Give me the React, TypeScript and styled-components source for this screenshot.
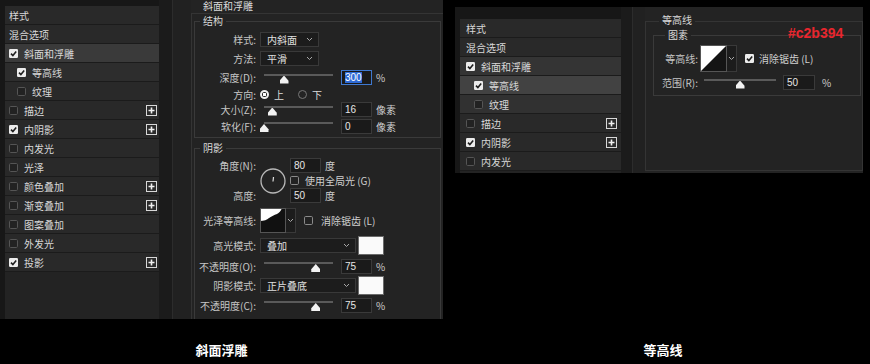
import React from 'react';
import styled, { createGlobalStyle } from 'styled-components';

const UI_FONT = `"Noto Sans CJK SC", "Noto Sans", "DejaVu Sans", sans-serif`;

const GlobalStyle = createGlobalStyle`
  * { box-sizing: border-box; }
  body { margin: 0; background: #000; }
`;

type Item = { label: string; check?: boolean; sub?: boolean; plus?: boolean; bg?: string };

const leftItems: Item[] = [
    { label: '样式' },
    { label: '混合选项' },
    { label: '斜面和浮雕', check: true, bg: '#3a3a3a' },
    { label: '等高线', check: true, sub: true, bg: '#2d2d2d' },
    { label: '纹理', check: false, sub: true },
    { label: '描边', check: false, plus: true },
    { label: '内阴影', check: true, plus: true },
    { label: '内发光', check: false },
    { label: '光泽', check: false },
    { label: '颜色叠加', check: false, plus: true },
    { label: '渐变叠加', check: false, plus: true },
    { label: '图案叠加', check: false },
    { label: '外发光', check: false },
    { label: '投影', check: true, plus: true },
];

const rightItems: Item[] = [
    { label: '样式' },
    { label: '混合选项' },
    { label: '斜面和浮雕', check: true, bg: '#343434' },
    { label: '等高线', check: true, sub: true, bg: '#424242' },
    { label: '纹理', check: false, sub: true, bg: '#313131' },
    { label: '描边', check: false, plus: true },
    { label: '内阴影', check: true, plus: true },
    { label: '内发光', check: false },
];

const Root = styled.div`
    width: 870px;
    height: 364px;
    background: #000;
    display: grid;
    grid-template-columns: 443px 408px;
    grid-template-rows: 335px 1fr;
    column-gap: 12px;
    font-family: ${UI_FONT};
    overflow: hidden;
`;

const Shot = styled.div<{ $h: number; $top: number }>`
    height: ${p => p.$h}px;
    margin-top: ${p => p.$top}px;
    display: flex;
    background: #171717;
    padding-left: 5px;
    overflow: hidden;
`;

const Caption = styled.div<{ $shift?: number }>`
    padding-top: 7px;
    padding-left: ${p => p.$shift ?? 0}px;
    text-align: center;
    color: #fff;
    font-size: 13px;
    line-height: 16px;
    font-weight: bold;
`;

const ListPanel = styled.div<{ $w: number; $top: number }>`
    width: ${p => p.$w}px;
    flex-shrink: 0;
    margin-top: ${p => p.$top}px;
    background: #232323;
    display: flex;
    flex-direction: column;
`;

const ListRow = styled.div<{ $bg?: string; $pad: number; $end: number }>`
    height: 19px;
    flex-shrink: 0;
    display: flex;
    align-items: center;
    gap: 6px;
    padding: 0 ${p => p.$end}px 0 ${p => p.$pad}px;
    background: ${p => p.$bg ?? '#292929'};
    border-bottom: 1px solid #1b1b1b;
    color: #d8d8d8;
    font-size: 10px;
    white-space: nowrap;
`;

const RowText = styled.span`
    flex: 1;
`;

const ScrollCol = styled.div<{ $w: number }>`
    width: ${p => p.$w}px;
    flex-shrink: 0;
    background: #1b1b1b;
`;

const SpacerCol = styled.div<{ $w: number }>`
    width: ${p => p.$w}px;
    flex-shrink: 0;
    background: #212121;
    border-left: 1px solid #2c2c2c;
`;

const Content = styled.div`
    flex: 1;
    position: relative;
    background: #232323;
    overflow: hidden;
`;

const OuterBox = styled.div<{ $mt: number; $pl: number; $full?: boolean }>`
    margin-top: ${p => p.$mt}px;
    padding: 0 ${p => (p.$full ? 1 : 2)}px 0 ${p => p.$pl}px;
    border-top: 1px solid #343434;
    border-left: 1px solid #343434;
    border-right: ${p => (p.$full ? '1px solid #343434' : 'none')};
    border-bottom: ${p => (p.$full ? '1px solid #343434' : 'none')};
    height: ${p => (p.$full ? '150px' : 'auto')};
`;

const Group = styled.div<{ $mt: number; $pt: number; $pb: number }>`
    margin-top: ${p => p.$mt}px;
    border: 1px solid #3a3a3a;
    padding-bottom: ${p => p.$pb}px;
`;

const GroupRows = styled.div<{ $pt: number }>`
    padding-top: ${p => p.$pt}px;
`;

const Legend = styled.div<{ $up?: number; $ml?: number }>`
    width: fit-content;
    height: 12px;
    margin: -${p => p.$up ?? 7}px 0 0 ${p => p.$ml ?? 7}px;
    padding: 0 3px;
    background: #232323;
    color: #dadada;
    font-size: 10px;
    line-height: 12px;
    white-space: nowrap;
`;

const FormRow = styled.div<{ $h: number; $mt?: number; $label: number; $gap?: number }>`
    display: grid;
    grid-template-columns: ${p => p.$label}px auto;
    column-gap: ${p => p.$gap ?? 4}px;
    align-items: center;
    height: ${p => p.$h}px;
    margin-top: ${p => p.$mt ?? 0}px;
`;

const Label = styled.span<{ $row?: number }>`
    grid-row: ${p => p.$row ?? 'auto'};
    text-align: right;
    color: #c6c6c6;
    font-size: 10px;
    white-space: nowrap;
`;

const Controls = styled.div<{ $gap?: number; $row?: number; $col?: number }>`
    grid-row: ${p => p.$row ?? 'auto'};
    grid-column: ${p => p.$col ?? 'auto'};
    display: flex;
    align-items: center;
    gap: ${p => p.$gap ?? 4}px;
    color: #cfcfcf;
    font-size: 10px;
    white-space: nowrap;
`;

const Select = styled.div<{ $w: number }>`
    width: ${p => p.$w}px;
    height: 15px;
    display: flex;
    align-items: center;
    justify-content: space-between;
    padding: 0 5px 0 6px;
    background: #1c1c1c;
    border: 1px solid #393939;
    color: #e0e0e0;
    font-size: 10px;
`;

const NumBox = styled.div<{ $w?: number; $active?: boolean }>`
    width: ${p => p.$w ?? 31}px;
    height: 15px;
    padding-left: 3px;
    background: #1a1a1a;
    border: 1px solid ${p => (p.$active ? '#3f78cf' : '#3a3a3a')};
    color: #e6e6e6;
    font-family: "Liberation Sans", Arial, sans-serif;
    font-size: 10px;
    line-height: 13px;
`;

const Unit = styled.span<{ $ml?: number }>`
    margin-left: ${p => p.$ml ?? 0}px;
`;

const Selected = styled.span`
    background: #2f6bd6;
    color: #fff;
`;

const SliderBox = styled.div<{ $w: number }>`
    position: relative;
    width: ${p => p.$w}px;
    height: 14px;
    padding: 3px 4px 0;
`;

const Track = styled.div`
    height: 2px;
    background: #5a5a5a;
`;

const Thumb = styled.div`
    position: absolute;
    top: 5px;
    width: 9px;
    height: 8px;
    background: #f2f2f2;
    clip-path: polygon(50% 0, 100% 65%, 100% 100%, 0 100%, 0 65%);
`;

const Swatch = styled.div`
    width: 26px;
    height: 19px;
    background: #fafafa;
    border: 1px solid #6a6a6a;
`;

const RadioDot = styled.span<{ $on?: boolean }>`
    width: 9px;
    height: 9px;
    border-radius: 50%;
    border: ${p => (p.$on ? '2px solid #eee' : '1px solid #777')};
    background: ${p => (p.$on ? 'radial-gradient(circle, #fff 0 1.5px, #1c1c1c 2px)' : 'transparent')};
`;

const RadioItem = styled.span`
    display: flex;
    align-items: center;
    gap: 5px;
    color: #dcdcdc;
`;

const ContourWrap = styled.div`
    display: flex;
`;

const ContourArrow = styled.div<{ $h: number }>`
    width: 10px;
    height: ${p => p.$h}px;
    display: flex;
    align-items: center;
    justify-content: center;
    background: #1c1c1c;
    border: 1px solid #393939;
    border-left: none;
`;

const AngleBlock = styled.div`
    display: grid;
    grid-template-columns: 61px 26px auto;
    grid-template-rows: 15px 15px 15px;
    column-gap: 4px;
    align-items: center;
`;

const Dial = styled.div`
    grid-column: 2;
    grid-row: 1 / span 3;
    display: flex;
`;

const Note = styled.div`
    position: absolute;
    left: 143px;
    top: 18px;
    color: #e9262e;
    font-family: "Liberation Sans", Arial, sans-serif;
    font-weight: bold;
    font-size: 14px;
    line-height: 16px;
`;

const CheckBox = ({ on, dim }: { on: boolean; dim?: boolean }) =>
    on ? (
        <svg width="9" height="9" viewBox="0 0 9 9">
            <rect x="0" y="0" width="9" height="9" rx="1.2" fill="#ececec" />
            <path d="M2 4.6 L3.9 6.5 L7.2 2.6" stroke="#1e1e1e" strokeWidth="1.6" fill="none" />
        </svg>
    ) : (
        <svg width="9" height="9" viewBox="0 0 9 9">
            <rect x="0.5" y="0.5" width="8" height="8" rx="1.2" fill="#222" stroke={dim ? '#555' : '#8a8a8a'} />
        </svg>
    );

const PlusBtn = () => (
    <svg width="11" height="11" viewBox="0 0 11 11">
        <rect x="0.5" y="0.5" width="10" height="10" fill="#2c2c2c" stroke="#d8d8d8" />
        <path d="M5.5 2.5 V8.5 M2.5 5.5 H8.5" stroke="#f0f0f0" strokeWidth="1.6" />
    </svg>
);

const Chevron = () => (
    <svg width="7" height="5" viewBox="0 0 7 5">
        <path d="M1 1 L3.5 3.5 L6 1" stroke="#a8a8a8" strokeWidth="1" fill="none" />
    </svg>
);

const Slider = ({ w, pct }: { w: number; pct: number }) => {
    const span = w - 8;
    return (
        <SliderBox $w={w}>
            <Track />
            <Thumb style={{ left: 4 + span * pct - 4.5 }} />
        </SliderBox>
    );
};

const List = ({ items, w, top, pad, end }: { items: Item[]; w: number; top: number; pad: number; end: number }) => (
    <ListPanel $w={w} $top={top}>
        {items.map(it => (
            <ListRow key={it.label} $bg={it.bg} $pad={it.sub ? pad + 8 : pad} $end={end}>
                {it.check !== undefined && <CheckBox on={it.check} dim />}
                <RowText>{it.label}</RowText>
                {it.plus && <PlusBtn />}
            </ListRow>
        ))}
    </ListPanel>
);

const GlossContour = () => (
    <svg width="26" height="25" viewBox="0 0 26 25">
        <rect x="0" y="0" width="26" height="25" fill="#fff" />
        <path d="M0 13 C4 13 7 12 9 10 C12 8 14 7 17 6 C19 5 21 3 22 0 L26 0 L26 25 L0 25 Z" fill="#111" />
        <rect x="0.5" y="0.5" width="25" height="24" fill="none" stroke="#555" />
    </svg>
);

const LinearContour = () => (
    <svg width="27" height="27" viewBox="0 0 27 27">
        <rect x="0" y="0" width="27" height="27" fill="#fff" />
        <path d="M0 27 L27 0 L27 27 Z" fill="#141414" />
        <rect x="0.5" y="0.5" width="26" height="26" fill="none" stroke="#555" />
    </svg>
);

const BevelPanel = () => (
    <Content>
        <OuterBox $mt={13} $pl={2}>
            <Legend $up={14} $ml={6}>斜面和浮雕</Legend>
            <Group $mt={9} $pt={3} $pb={3}>
                <Legend $ml={5}>结构</Legend>
                <GroupRows $pt={3}>
                    <FormRow $h={19} $label={61}>
                        <Label>样式:</Label>
                        <Controls><Select $w={59}>内斜面<Chevron /></Select></Controls>
                    </FormRow>
                    <FormRow $h={19} $label={61}>
                        <Label>方法:</Label>
                        <Controls><Select $w={59}>平滑<Chevron /></Select></Controls>
                    </FormRow>
                    <FormRow $h={19} $label={61}>
                        <Label>深度(D):</Label>
                        <Controls>
                            <Slider w={77} pct={0.29} />
                            <NumBox $active><Selected>300</Selected></NumBox>
                            <Unit>%</Unit>
                        </Controls>
                    </FormRow>
                    <FormRow $h={14} $label={61}>
                        <Label>方向:</Label>
                        <Controls $gap={14}>
                            <RadioItem><RadioDot $on />上</RadioItem>
                            <RadioItem><RadioDot />下</RadioItem>
                        </Controls>
                    </FormRow>
                    <FormRow $h={17} $label={61}>
                        <Label>大小(Z):</Label>
                        <Controls>
                            <Slider w={77} pct={0.12} />
                            <NumBox>16</NumBox>
                            <Unit>像素</Unit>
                        </Controls>
                    </FormRow>
                    <FormRow $h={16} $label={61}>
                        <Label>软化(F):</Label>
                        <Controls>
                            <Slider w={77} pct={0} />
                            <NumBox>0</NumBox>
                            <Unit>像素</Unit>
                        </Controls>
                    </FormRow>
                </GroupRows>
            </Group>
            <Group $mt={10} $pt={4} $pb={20}>
                <Legend $ml={5}>阴影</Legend>
                <GroupRows $pt={4}>
                    <AngleBlock>
                        <Label $row={1}>角度(N):</Label>
                        <Dial>
                            <svg width="26" height="26" viewBox="0 0 26 26">
                                <circle cx="13" cy="13" r="12" fill="none" stroke="#b8b8b8" strokeWidth="1.3" />
                                <path d="M13 13.5 L13.5 9" stroke="#e0e0e0" strokeWidth="1.2" />
                            </svg>
                        </Dial>
                        <Controls $row={1} $col={3}>
                            <NumBox>80</NumBox>
                            <Unit>度</Unit>
                        </Controls>
                        <Controls $row={2} $col={3} $gap={6}>
                            <CheckBox on={false} />
                            <span>使用全局光 (G)</span>
                        </Controls>
                        <Label $row={3}>高度:</Label>
                        <Controls $row={3} $col={3}>
                            <NumBox>50</NumBox>
                            <Unit>度</Unit>
                        </Controls>
                    </AngleBlock>
                    <FormRow $h={26} $mt={4} $label={61}>
                        <Label>光泽等高线:</Label>
                        <Controls $gap={8}>
                            <ContourWrap>
                                <GlossContour />
                                <ContourArrow $h={25}><Chevron /></ContourArrow>
                            </ContourWrap>
                            <CheckBox on={false} />
                            <span>消除锯齿 (L)</span>
                        </Controls>
                    </FormRow>
                    <FormRow $h={19} $mt={3} $label={61}>
                        <Label>高光模式:</Label>
                        <Controls $gap={2}>
                            <Select $w={96}>叠加<Chevron /></Select>
                            <Swatch />
                        </Controls>
                    </FormRow>
                    <FormRow $h={18} $mt={2} $label={61}>
                        <Label>不透明度(O):</Label>
                        <Controls>
                            <Slider w={77} pct={0.75} />
                            <NumBox>75</NumBox>
                            <Unit>%</Unit>
                        </Controls>
                    </FormRow>
                    <FormRow $h={20} $label={61}>
                        <Label>阴影模式:</Label>
                        <Controls $gap={2}>
                            <Select $w={96}>正片叠底<Chevron /></Select>
                            <Swatch />
                        </Controls>
                    </FormRow>
                    <FormRow $h={18} $mt={1} $label={61}>
                        <Label>不透明度(C):</Label>
                        <Controls>
                            <Slider w={77} pct={0.75} />
                            <NumBox>75</NumBox>
                            <Unit>%</Unit>
                        </Controls>
                    </FormRow>
                </GroupRows>
            </Group>
        </OuterBox>
    </Content>
);

const ContourPanel = () => (
    <Content>
        <OuterBox $mt={14} $pl={7} $full>
            <Legend $up={8} $ml={6}>等高线</Legend>
            <Group $mt={9} $pt={4} $pb={6}>
                <Legend $ml={11}>图素</Legend>
                <GroupRows $pt={4}>
                    <FormRow $h={27} $label={44} $gap={2}>
                        <Label>等高线:</Label>
                        <Controls $gap={8}>
                            <ContourWrap>
                                <LinearContour />
                                <ContourArrow $h={27}><Chevron /></ContourArrow>
                            </ContourWrap>
                            <Controls $gap={5}>
                                <CheckBox on />
                                <span>消除锯齿 (L)</span>
                            </Controls>
                        </Controls>
                    </FormRow>
                    <FormRow $h={14} $mt={3} $label={44} $gap={2}>
                        <Label>范围(R):</Label>
                        <Controls $gap={3}>
                            <Slider w={80} pct={0.5} />
                            <NumBox $w={32}>50</NumBox>
                            <Unit $ml={4}>%</Unit>
                        </Controls>
                    </FormRow>
                </GroupRows>
            </Group>
        </OuterBox>
        <Note>#c2b394</Note>
    </Content>
);

export default function App() {
    return (
        <Root>
            <GlobalStyle />
            <Shot $h={319} $top={0}>
                <List items={leftItems} w={154} top={6} pad={4} end={2} />
                <ScrollCol $w={13} />
                <SpacerCol $w={19} />
                <BevelPanel />
            </Shot>
            <Shot $h={166} $top={7}>
                <List items={rightItems} w={161} top={12} pad={6} end={4} />
                <ScrollCol $w={11} />
                <SpacerCol $w={13} />
                <ContourPanel />
            </Shot>
            <Caption>斜面浮雕</Caption>
            <Caption $shift={8}>等高线</Caption>
        </Root>
    );
}
